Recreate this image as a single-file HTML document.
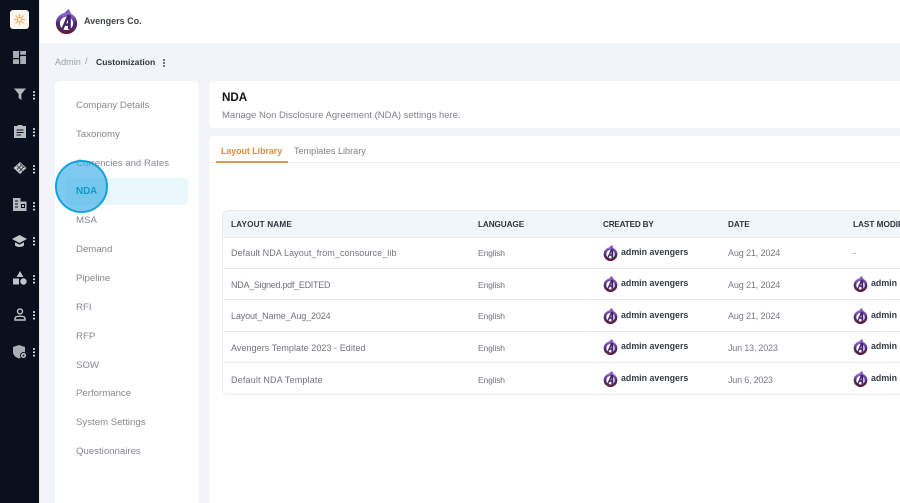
<!DOCTYPE html>
<html><head><meta charset="utf-8">
<style>
html,body{margin:0;padding:0;width:900px;height:503px;overflow:hidden;background:#f1f5f9;font-family:"Liberation Sans",sans-serif}
body{filter:blur(.25px)}
.a{position:absolute}
.t{position:absolute;white-space:nowrap;line-height:14px;height:14px}
.m{font-size:9.65px;color:#85888e;left:76px}
.h{font-size:8.2px;font-weight:bold;color:#2f3540;top:218px}
.c{font-size:9px;color:#70747b;top:0}
.e{font-size:8.5px;color:#70747b;left:478px;letter-spacing:-.14px}
.dt{font-size:9px;color:#777b82;left:728px;letter-spacing:-.12px}
.u{font-size:8.85px;font-weight:bold;color:#363b44}
.x{left:871px;width:27px;overflow:hidden}
.l{position:absolute;left:223px;width:677px;height:1px;background:#e9ecef}
.d{position:absolute;width:2.4px;height:2.4px;border-radius:50%;background:#eef0f3;box-shadow:0 3.3px 0 #eef0f3,0 6.6px 0 #eef0f3}
svg{position:absolute;overflow:visible}
</style></head><body>
<svg width="0" height="0" style="position:absolute"><defs>
<linearGradient id="gr" x1="0" y1="0" x2="0" y2="1"><stop offset="0" stop-color="#8a62c4"/><stop offset=".5" stop-color="#4b2a78"/><stop offset="1" stop-color="#5e1f3c"/></linearGradient>
<symbol id="lg" viewBox="0 0 24 26">
<path d="M14.500 0 C11 2.500 8.500 5 7.500 8 L18 8 C17 5 15.500 2.500 14.500 0Z" fill="#8158bd"/>
<circle cx="12" cy="15" r="9" fill="#fff" stroke="url(#gr)" stroke-width="4.200"/>
<path d="M6.500 21 L13 6 L16.500 6 L16.500 21 L13.500 21 L13.500 17.500 L10.500 17.500 L9 21Z M13.500 15 L13.500 11 L11.700 15Z" fill="#43246e"/>
</symbol></defs></svg>

<!-- sidebar -->
<div class="a" style="left:0;top:0;width:39px;height:503px;background:#0a111e"></div>
<div class="a" style="left:39px;top:0;width:1px;height:503px;background:#e6e9ee"></div>
<div class="a" style="left:10px;top:10px;width:19px;height:19px;border-radius:3px;background:#fbf6ef"></div>
<svg style="left:13px;top:13px" width="13" height="13" viewBox="0 0 13 13" fill="none" stroke="#eeb478" stroke-width="1.300"><path d="M6.500 1V12M1 6.500H12M2.600 2.600L10.400 10.400M10.400 2.600L2.600 10.400"/><circle cx="6.500" cy="6.500" r="2" fill="#fbf6ef" stroke-width="1"/></svg>

<svg style="left:13px;top:51px" width="13" height="13" viewBox="0 0 13 13" fill="#a9adb4"><path d="M0 0H6V7H0ZM7.200 0H13V3.800H7.200ZM7.200 5H13V13H7.200ZM0 8.300H6V13H0Z"/></svg>
<svg style="left:14px;top:88px" width="12" height="12" viewBox="0 0 12 12" fill="#b3b6bb"><path d="M0 .5H12L7.400 6V12L4.600 10V6Z"/></svg>
<div class="d" style="left:33px;top:91px"></div>
<svg style="left:14px;top:124px" width="12" height="14" viewBox="0 0 12 14"><path d="M0 2H3.500V1H8.500V2H12V14H0Z" fill="#b9bcc1"/><path d="M2.500 6H9.500M2.500 8.500H9.500M2.500 11H7" stroke="#0a111e" stroke-width="1.100"/></svg>
<div class="d" style="left:33px;top:128px"></div>
<svg style="left:13px;top:161px" width="14" height="14" viewBox="0 0 14 14"><path d="M7 1L13.500 7 7 13 .5 7Z" fill="#c4c6ca"/><path d="M4 4.500L10 10.500M7 2.500L11.500 7M4 8.500L8 4.500M6 10.500L10.500 6" stroke="#0a111e" stroke-width=".6"/></svg>
<div class="d" style="left:33px;top:165px"></div>
<svg style="left:13px;top:198px" width="14" height="13" viewBox="0 0 14 13"><path d="M0 0H7.500V3.500H13.500V13H0Z" fill="#b6b9be"/><path d="M2 3H5M2 6H5M2 9H5M8.500 6.500H11.500V9.500H8.500Z" stroke="#0a111e" stroke-width="1" fill="none"/></svg>
<div class="d" style="left:33px;top:202px"></div>
<svg style="left:12px;top:235px" width="15" height="13" viewBox="0 0 15 13" fill="#c4c6ca"><path d="M7.500 0L15 4 7.500 8 0 4Z"/><path d="M3 7.200L7.500 9.600 12 7.200V10.400C10.500 12.500 4.500 12.500 3 10.400Z"/></svg>
<div class="d" style="left:33px;top:237px"></div>
<svg style="left:13px;top:271px" width="14" height="14" viewBox="0 0 14 14" fill="#c2c4c9"><path d="M7 0L10.400 6H3.600Z"/><rect x="0" y="7.500" width="6" height="6"/><circle cx="10.500" cy="10.500" r="3.200"/></svg>
<div class="d" style="left:33px;top:275px"></div>
<svg style="left:14px;top:308px" width="12" height="13" viewBox="0 0 12 13" fill="none" stroke="#c4c6ca" stroke-width="1.400"><circle cx="6" cy="3.400" r="2.500"/><path d="M1 12V10.500C1 9 3 8.200 6 8.200S11 9 11 10.500V12Z"/></svg>
<div class="d" style="left:33px;top:311px"></div>
<svg style="left:13px;top:345px" width="14" height="14" viewBox="0 0 14 14"><path d="M6 0L12 2V7C12 10 9.500 12.500 6 13.500 2.500 12.500 0 10 0 7V2Z" fill="#a9adb4"/><circle cx="10.500" cy="10.500" r="3" fill="#c4c6ca" stroke="#0a111e"/><circle cx="10.500" cy="10.500" r="1" fill="#0a111e"/></svg>
<div class="d" style="left:33px;top:348px"></div>

<!-- top bar -->
<div class="a" style="left:40px;top:0;width:860px;height:43px;background:#fff"></div>
<svg style="left:55px;top:9px" width="23" height="25"><use href="#lg" width="23" height="25"/></svg>
<div class="t" style="left:84px;top:14px;font-size:9px;color:#3f444c;font-weight:bold">Avengers Co.</div>

<!-- breadcrumb -->
<div class="t" style="left:55px;top:55px;font-size:9.100px;color:#9ba0a6">Admin</div>
<div class="t" style="left:85px;top:55px;font-size:9.600px;color:#9ba0a6">/</div>
<div class="t" style="left:96px;top:55px;font-size:8.600px;color:#2f3540;font-weight:bold">Customization</div>
<div class="d" style="left:162.500px;top:59px;width:2px;height:2px;background:#444a52;box-shadow:0 3px 0 #444a52,0 6px 0 #444a52"></div>

<!-- left menu -->
<div class="a" style="left:55px;top:81px;width:144px;height:422px;background:#fff;border-radius:5px 5px 0 0"></div>
<div class="a" style="left:66px;top:178px;width:122px;height:27px;background:#e9f7fb;border-radius:4px"></div>
<div class="t m" style="top:99px">Company Details</div>
<div class="t m" style="top:128px">Taxonomy</div>
<div class="t m" style="top:157px">Currencies and Rates</div>
<div class="t m" style="top:214px">MSA</div>
<div class="t m" style="top:243px">Demand</div>
<div class="t m" style="top:272px">Pipeline</div>
<div class="t m" style="top:301px">RFI</div>
<div class="t m" style="top:330px">RFP</div>
<div class="t m" style="top:359px">SOW</div>
<div class="t m" style="top:387px">Performance</div>
<div class="t m" style="top:416px">System Settings</div>
<div class="t m" style="top:445px">Questionnaires</div>

<!-- highlight -->
<div class="a" style="left:55px;top:160px;width:53px;height:53px;box-sizing:border-box;border-radius:50%;background:rgba(64,176,232,.68);border:2.500px solid #12a2dc"></div>
<div class="t" style="left:76px;top:185px;font-size:9.800px;font-weight:bold;color:#1199c8">NDA</div>

<!-- header card -->
<div class="a" style="left:209px;top:81px;width:691px;height:47px;background:#fff;border-radius:5px 0 0 5px"></div>
<div class="t" style="left:222px;top:91px;font-size:11.600px;font-weight:bold;color:#111">NDA</div>
<div class="t" style="left:222px;top:109px;font-size:9.500px;color:#7e8288">Manage Non Disclosure Agreement (NDA) settings here.</div>

<!-- content card -->
<div class="a" style="left:209px;top:136px;width:691px;height:367px;background:#fff;border-radius:5px 0 0 0"></div>
<div class="t" style="left:221px;top:144px;font-size:8.800px;font-weight:bold;color:#dc8c3c">Layout Library</div>
<div class="t" style="left:294px;top:144px;font-size:9.100px;color:#7e8288">Templates Library</div>
<div class="a" style="left:209px;top:162px;width:691px;height:1px;background:#eceef1"></div>
<div class="a" style="left:216px;top:161px;width:72px;height:2px;background:#e39a50"></div>

<!-- table -->
<div class="a" style="left:222px;top:210px;width:678px;height:185px;box-sizing:border-box;border:1px solid #e9ecef;border-right:0;border-radius:6px 0 0 6px"></div>
<div class="a" style="left:223px;top:211px;width:677px;height:26px;background:#f1f6fa;border-radius:5px 0 0 0"></div>
<div class="l" style="top:237px"></div>
<div class="l" style="top:268px"></div>
<div class="l" style="top:299px"></div>
<div class="l" style="top:331px"></div>
<div class="l" style="top:362px"></div>

<div class="t h" style="left:231px;letter-spacing:.15px">LAYOUT NAME</div>
<div class="t h" style="left:478px;letter-spacing:-.1px">LANGUAGE</div>
<div class="t h" style="left:603px;letter-spacing:-.2px">CREATED BY</div>
<div class="t h" style="left:728px">DATE</div>
<div class="t h" style="left:853px;width:47px;overflow:hidden">LAST MODIFIED BY</div>

<div class="t c" style="left:231px;top:246px;letter-spacing:.08px">Default NDA Layout_from_consource_lib</div>
<div class="t e" style="top:246px">English</div>
<svg style="left:603px;top:245px" width="15" height="16"><use href="#lg" width="15" height="16"/></svg>
<div class="t u" style="left:621px;top:245px">admin avengers</div>
<div class="t dt" style="top:246px">Aug 21, 2024</div>
<div class="t c" style="left:853px;top:246px">-</div>

<div class="t c" style="left:231px;top:278px;letter-spacing:-.28px">NDA_Signed.pdf_EDITED</div>
<div class="t e" style="top:278px">English</div>
<svg style="left:603px;top:276px" width="15" height="16"><use href="#lg" width="15" height="16"/></svg>
<div class="t u" style="left:621px;top:276px">admin avengers</div>
<div class="t dt" style="top:278px">Aug 21, 2024</div>
<svg style="left:853px;top:276px" width="15" height="16"><use href="#lg" width="15" height="16"/></svg>
<div class="t u x" style="top:276px">admin avengers</div>

<div class="t c" style="left:231px;top:309px;letter-spacing:-.13px">Layout_Name_Aug_2024</div>
<div class="t e" style="top:309px">English</div>
<svg style="left:603px;top:308px" width="15" height="16"><use href="#lg" width="15" height="16"/></svg>
<div class="t u" style="left:621px;top:308px">admin avengers</div>
<div class="t dt" style="top:309px">Aug 21, 2024</div>
<svg style="left:853px;top:308px" width="15" height="16"><use href="#lg" width="15" height="16"/></svg>
<div class="t u x" style="top:308px">admin avengers</div>

<div class="t c" style="left:231px;top:341px;letter-spacing:.06px">Avengers Template 2023 - Edited</div>
<div class="t e" style="top:341px">English</div>
<svg style="left:603px;top:339px" width="15" height="16"><use href="#lg" width="15" height="16"/></svg>
<div class="t u" style="left:621px;top:339px">admin avengers</div>
<div class="t dt" style="top:341px;letter-spacing:-.2px">Jun 13, 2023</div>
<svg style="left:853px;top:339px" width="15" height="16"><use href="#lg" width="15" height="16"/></svg>
<div class="t u x" style="top:339px">admin avengers</div>

<div class="t c" style="left:231px;top:373px;letter-spacing:.17px">Default NDA Template</div>
<div class="t e" style="top:373px">English</div>
<svg style="left:603px;top:371px" width="15" height="16"><use href="#lg" width="15" height="16"/></svg>
<div class="t u" style="left:621px;top:371px">admin avengers</div>
<div class="t dt" style="top:373px;letter-spacing:-.2px">Jun 6, 2023</div>
<svg style="left:853px;top:371px" width="15" height="16"><use href="#lg" width="15" height="16"/></svg>
<div class="t u x" style="top:371px">admin avengers</div>
</body></html>
